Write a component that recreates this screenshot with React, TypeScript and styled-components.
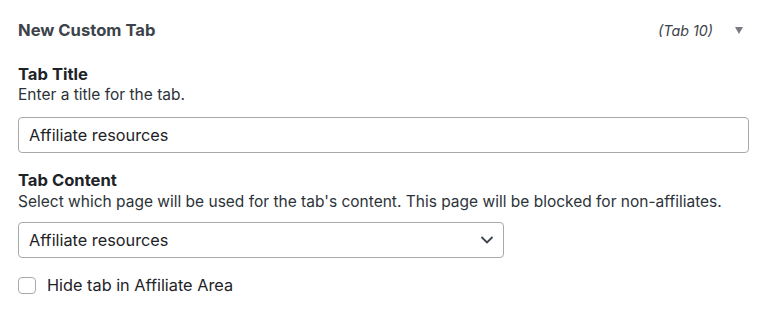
import React from "react";
import styled, { createGlobalStyle } from "styled-components";

const Global = createGlobalStyle`
  html, body { margin: 0; padding: 0; background: #ffffff; }
  body {
    font-family: Inter, "Noto Sans", "Liberation Sans", sans-serif;
    color: #1d2327;
    -webkit-font-smoothing: antialiased;
  }
`;

const Panel = styled.div`
  width: 767px;
  height: 315px;
  box-sizing: border-box;
  padding: 20px 18px 0 18px;
  background: #fff;
`;

const Header = styled.div`
  display: flex;
  align-items: center;
  height: 20px;
  padding-right: 6px;
`;

const HeaderTitle = styled.div`
  flex: 1;
  font-size: 16.6px;
  font-weight: 700;
  color: #3c434a;
`;

const TabIndex = styled.span`
  font-size: 14.3px;
  font-style: italic;
  color: #3c434a;
`;

const Toggle = styled.span`
  margin-left: 22px;
  width: 0;
  height: 0;
  border-left: 4.5px solid transparent;
  border-right: 4.5px solid transparent;
  border-top: 7px solid #787c82;
`;

const Field = styled.div<{ $top: number }>`
  margin-top: ${(p) => p.$top}px;
  display: flex;
  flex-direction: column;
  align-items: flex-start;
`;

const Label = styled.div`
  font-size: 16.6px;
  font-weight: 700;
  line-height: 20px;
  color: #1d2327;
`;

const Help = styled.div<{ $gap: number }>`
  font-size: 15.5px;
  line-height: 22px;
  color: #2c3338;
  margin-top: ${(p) => p.$gap}px;
  white-space: nowrap;
`;

const TextInput = styled.div<{ $gap: number }>`
  box-sizing: border-box;
  margin-top: ${(p) => p.$gap}px;
  width: 100%;
  height: 36px;
  border: 1px solid #a7aaad;
  border-radius: 4px;
  padding: 0 10px;
  display: flex;
  align-items: center;
  font-size: 16.3px;
  color: #1d2327;
`;

const Select = styled(TextInput)`
  width: 486px;
  justify-content: space-between;
  padding-right: 8px;
`;

const CheckRow = styled.label`
  display: flex;
  align-items: center;
  gap: 11px;
  height: 20px;
  margin-top: 17px;
  font-size: 16.3px;
  color: #1d2327;
`;

const Box = styled.span`
  box-sizing: border-box;
  width: 18px;
  height: 17px;
  border: 1px solid #a7aaad;
  border-radius: 4px;
  background: #fff;
`;

const Chevron = () => (
  <svg width="16" height="14" viewBox="0 0 16 14" aria-hidden="true">
    <path d="M2.5 4 L8 9.5 L13.5 4" fill="none" stroke="#3c434a" strokeWidth="1.8" />
  </svg>
);

export default function App() {
  return (
    <>
      <Global />
      <Panel>
        <Header>
          <HeaderTitle>New Custom Tab</HeaderTitle>
          <TabIndex>(Tab 10)</TabIndex>
          <Toggle />
        </Header>
        <Field $top={24}>
          <Label>Tab Title</Label>
          <Help $gap={0}>Enter a title for the tab.</Help>
          <TextInput $gap={11}>Affiliate resources</TextInput>
        </Field>
        <Field $top={17}>
          <Label>Tab Content</Label>
          <Help $gap={1}>Select which page will be used for the tab's content. This page will be blocked for non-affiliates.</Help>
          <Select $gap={9}>
            <span>Affiliate resources</span>
            <Chevron />
          </Select>
        </Field>
        <CheckRow>
          <Box />
          Hide tab in Affiliate Area
        </CheckRow>
      </Panel>
    </>
  );
}
